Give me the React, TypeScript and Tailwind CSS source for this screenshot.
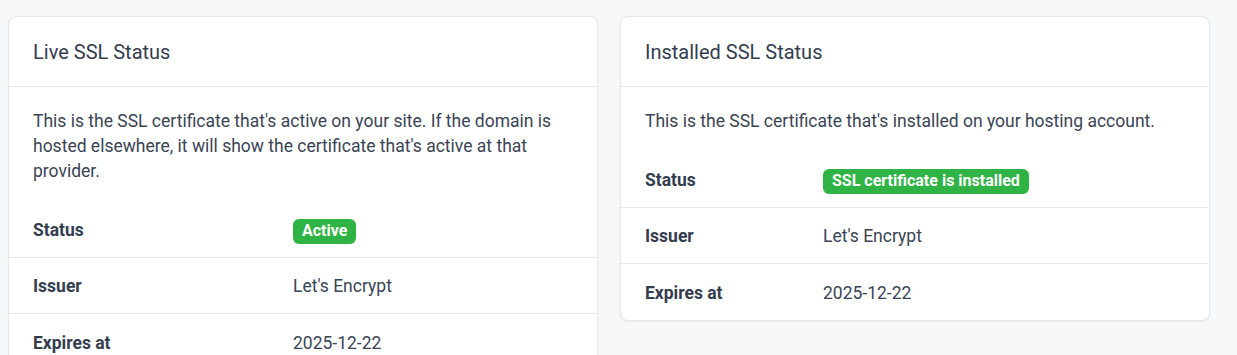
import React from "react"

type Row = { label: string; value: React.ReactNode }

function Badge({ children }: { children: React.ReactNode }) {
  return (
    <span className="inline-flex h-[25px] items-center rounded-[6px] bg-[#2fb344] px-[9px] text-[16px] font-bold leading-none text-white">
      {children}
    </span>
  )
}

function StatusCard({
  title,
  intro,
  rows,
  labelWidth,
}: {
  title: string
  intro: string
  rows: Row[]
  labelWidth: string
}) {
  return (
    <div className="overflow-hidden rounded-lg border border-[#e6e7ea] bg-white shadow-[0_1px_2px_rgba(0,0,0,0.06)]">
      {/* Header */}
      <div className="flex h-[70px] items-center border-b border-[#e6e7ea] px-6">
        <h3 className="text-[20px] font-normal text-[#333d4e]">{title}</h3>
      </div>

      {/* Body */}
      <p className="px-6 pt-[22px] pb-[18px] text-[17.5px] leading-[25px] text-[#3a4454]">{intro}</p>

      <div>
        {rows.map((row, i) => (
          <div
            key={row.label}
            className={
              "flex h-[56px] items-center px-6 pt-[2px] text-[17.5px] text-[#3a4454] " +
              (i < rows.length - 1 ? "border-b border-[#e6e7ea]" : "")
            }
          >
            <div className={labelWidth + " shrink-0 font-bold text-[#333d4e]"}>{row.label}</div>
            <div>{row.value}</div>
          </div>
        ))}
      </div>
    </div>
  )
}

export default function App() {
  return (
    <div
      className="min-h-screen bg-[#f7f8fa] pt-4 pl-2"
      style={{ fontFamily: "Roboto, 'Liberation Sans', sans-serif" }}
    >
      <div className="grid grid-cols-[590px_590px] items-start gap-[22px]">
        <StatusCard
          title="Live SSL Status"
          intro="This is the SSL certificate that's active on your site. If the domain is hosted elsewhere, it will show the certificate that's active at that provider."
          labelWidth="w-[260px]"
          rows={[
            { label: "Status", value: <Badge>Active</Badge> },
            { label: "Issuer", value: "Let's Encrypt" },
            { label: "Expires at", value: "2025-12-22" },
          ]}
        />
        <StatusCard
          title="Installed SSL Status"
          intro="This is the SSL certificate that's installed on your hosting account."
          labelWidth="w-[178px]"
          rows={[
            { label: "Status", value: <Badge>SSL certificate is installed</Badge> },
            { label: "Issuer", value: "Let's Encrypt" },
            { label: "Expires at", value: "2025-12-22" },
          ]}
        />
      </div>
    </div>
  )
}
